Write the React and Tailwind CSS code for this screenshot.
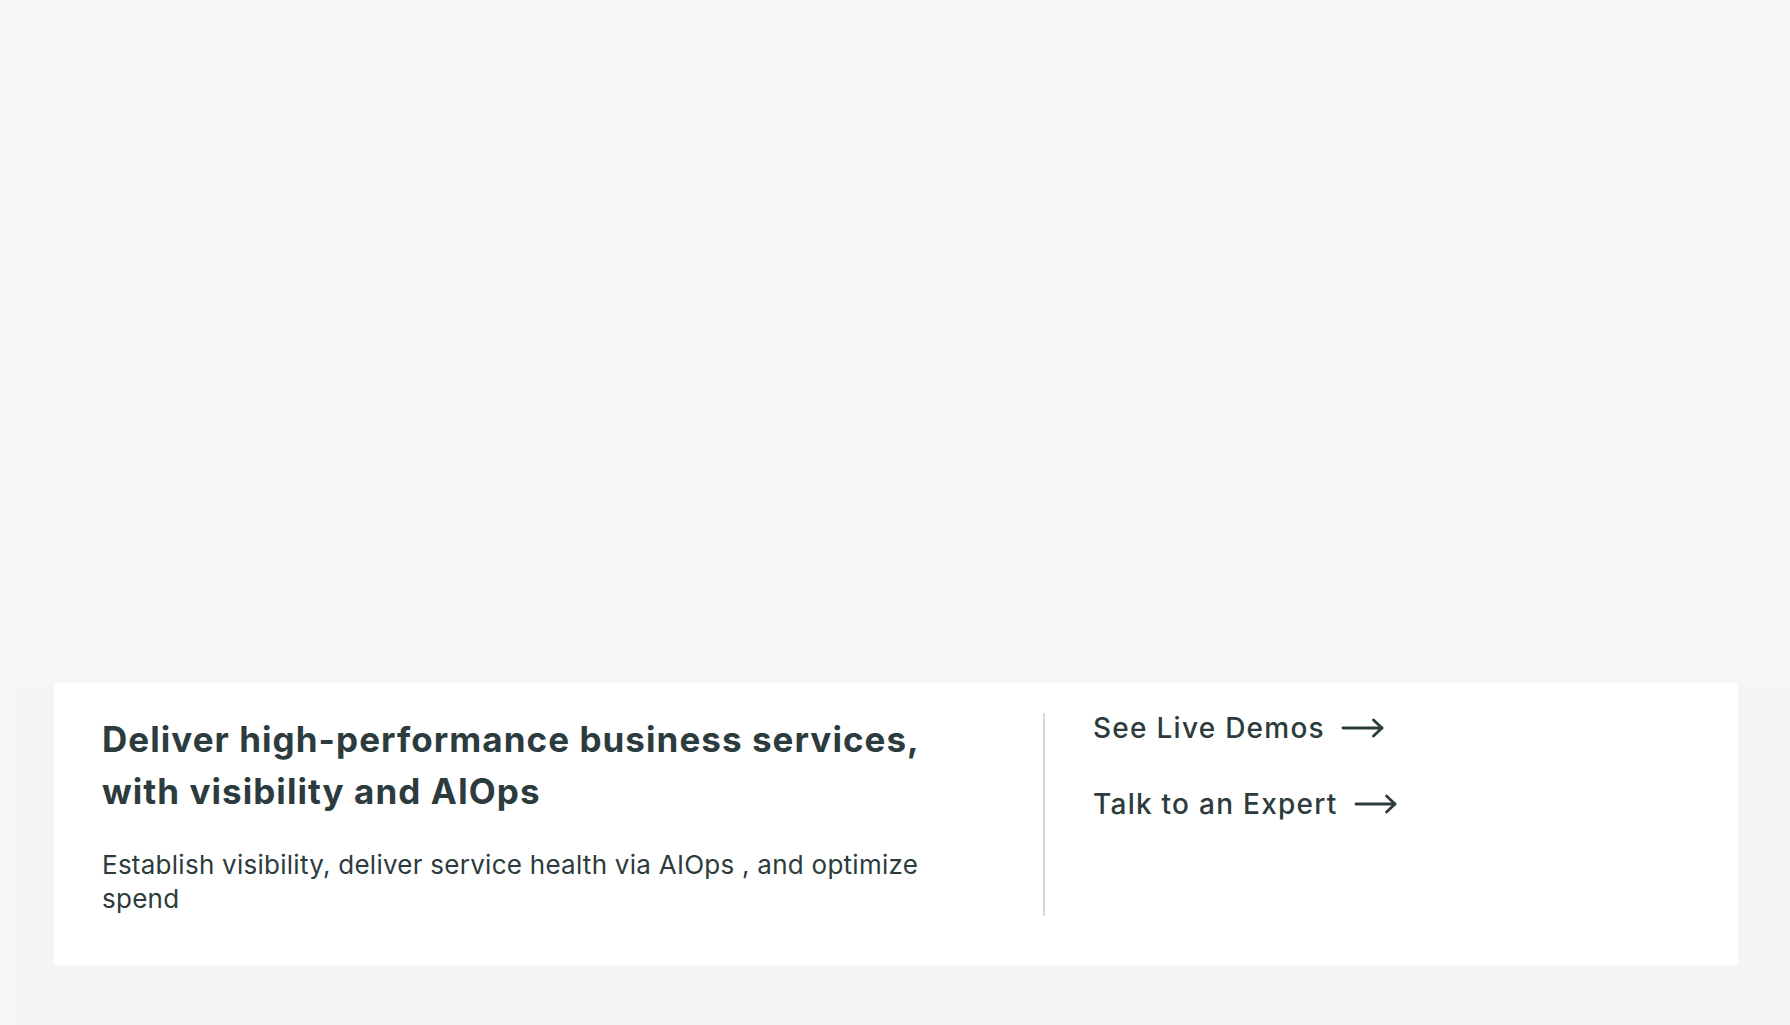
import React from "react";

const ArrowRight = () => (
  <svg width="44" height="22" viewBox="0 0 44 22" fill="none" stroke="currentColor" strokeWidth="2.8" strokeLinecap="round" strokeLinejoin="round">
    <path d="M2 11h39" />
    <path d="M32.5 3l8.5 8-8.5 8" />
  </svg>
);

const links = ["See Live Demos", "Talk to an Expert"];

const App = () => {
  return (
    <div className="min-h-screen w-full bg-[#f7f7f7] text-[#2c3b3d]" style={{ fontFamily: "Inter, 'Noto Sans', sans-serif" }}>
      {/* top empty area */}
      <div className="h-[682px] bg-[#f7f7f7]" />

      {/* bottom section */}
      <div className="flex h-[343px] bg-[#f5f5f5]">
        <div className="w-[13px] bg-[#f6f6f6]" />
        <div className="flex-1 pl-[41px] pr-[52px] pt-px">
          <div className="flex h-[282px] bg-white pl-[48px] pt-[30px] pb-[49px]">
            {/* left column */}
            <div className="w-[943px] pr-[80px] border-r-2 border-[#d5d9d9]">
              <h2 className="text-[35px] leading-[52px] font-bold tracking-[0.03em]">
                Deliver high-performance business services, with visibility and AIOps
              </h2>
              <p className="mt-[31px] text-[26px] leading-[34px] tracking-[0.01em]">
                Establish visibility, deliver service health via AIOps , and optimize spend
              </p>
            </div>

            {/* right column */}
            <div className="flex flex-col gap-[46px] pl-[48px]">
              {links.map((label) => (
                <a key={label} href="#" className="flex items-center gap-[16px] text-[28px] leading-[30px] font-medium tracking-[0.045em]">
                  <span>{label}</span>
                  <ArrowRight />
                </a>
              ))}
            </div>
          </div>
        </div>
      </div>
    </div>
  );
};

export default App;
